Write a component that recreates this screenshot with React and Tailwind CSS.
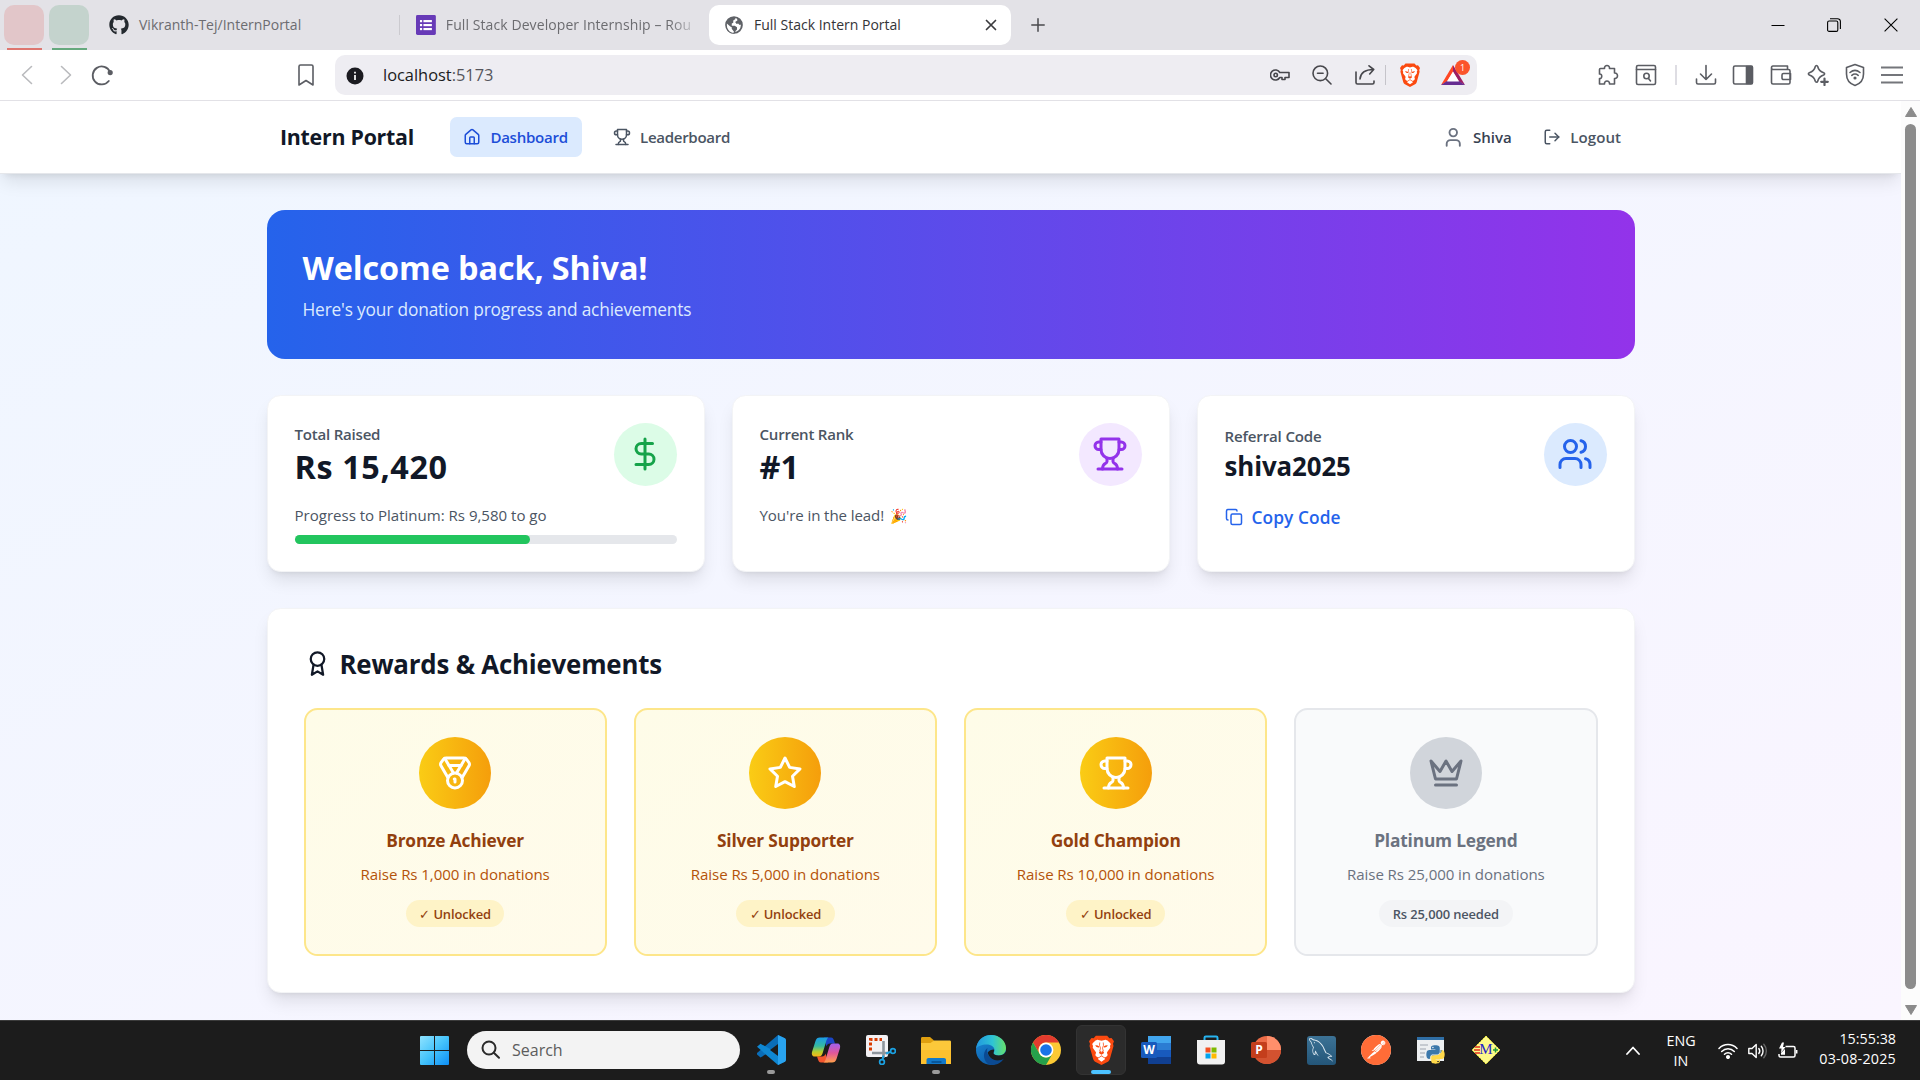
import React from "react";
import { House, LogOut, User, Users, DollarSign, Copy, Medal } from "lucide-react";
import { FaGithub, FaPython } from "react-icons/fa";
import { SiPostman } from "react-icons/si";
import { GrMysql } from "react-icons/gr";

function Line({ className, children, box = "0 0 24 24", width = 2 }) {
  return (
    <svg viewBox={box} className={className} fill="none" stroke="currentColor" strokeWidth={width} strokeLinecap="round" strokeLinejoin="round">
      {children}
    </svg>
  );
}

const Trophy = ({ className }) => (
  <Line className={className}>
    <path d="M6 9H4.5a2.5 2.5 0 0 1 0-5H6" />
    <path d="M18 9h1.5a2.5 2.5 0 0 0 0-5H18" />
    <path d="M4 22h16" />
    <path d="M10 14.66V17c0 .55-.47.98-.97 1.21C7.85 18.75 7 20.24 7 22" />
    <path d="M14 14.66V17c0 .55.47.98.97 1.21C16.15 18.75 17 20.24 17 22" />
    <path d="M18 2H6v7a6 6 0 0 0 12 0V2Z" />
  </Line>
);
const Crown = ({ className }) => (
  <Line className={className}>
    <path d="m2 4 3 12h14l3-12-6 7-4-7-4 7-6-7zm3 16h14" />
  </Line>
);
const Star = ({ className }) => (
  <Line className={className}>
    <polygon points="12 2 15.09 8.26 22 9.27 17 14.14 18.18 21.02 12 17.77 5.82 21.02 7 14.14 2 9.27 8.91 8.26 12 2" />
  </Line>
);
const Award = ({ className }) => (
  <Line className={className}>
    <circle cx="12" cy="8" r="6" />
    <path d="M15.477 12.89 17 22l-5-3-5 3 1.523-9.11" />
  </Line>
);

const BraveLogo = ({ className }) => (
  <svg viewBox="0 0 20 24" className={className}>
    <path d="M5.500 .5h9l1.800 2 1.700-.2L20 5l-.8 2 .4 1.800-2.900 10.400c-.3 1-.9 1.600-1.600 2.100L10 24l-5.100-2.700c-.7-.5-1.300-1.100-1.600-2.100L.4 8.800.8 7 0 5l2-2.700 1.700.2z" fill="#fb4a10" />
    <path d="M10 4.600c1.200 0 2.500-.9 3.700-.7 1.500.3 3 2.200 3.600 3.100.3.500-.3 1.100-.5 1.700l.2 1.500-2.400 3.300c-.4.500-.2 1 .1 1.500.3.700.2 1.400-.4 2l-1.200.8c-.4.200-.8.100-1.300-.3L10 16.200l-1.800 1.300c-.5.4-.9.500-1.300.3L5.700 17c-.6-.6-.7-1.300-.4-2 .3-.5.5-1 .1-1.500L3 10.200l.2-1.500C3 8.100 2.400 7.500 2.700 7c.6-.9 2.100-2.800 3.600-3.100 1.200-.2 2.500.7 3.700.7z" fill="#fff" />
    <path d="M7.300 18.700 10 17l2.700 1.700c.3.200.2.500 0 .7L10 21.300l-2.700-1.900c-.2-.2-.3-.5 0-.7z" fill="#fff" />
    <path d="M8.600 6l-.2 2.200.8 2.300-.6 2.300L10 13.700l1.400-.9-.6-2.300.8-2.300L11.400 6" fill="none" stroke="#fb4a10" strokeWidth=".6" strokeLinejoin="round" />
    <path d="M5 8.200c1.300-.1 2.400.2 3.200.9L8 9.900c-1.300.1-2.400-.2-3-1.700zM15 8.200c-1.300-.1-2.400.2-3.200.9l.2.800c1.300.1 2.400-.2 3-1.700zM8.500 13l1.500 1 1.500-1 .6 1.300L10 15.700l-2.100-1.400z" fill="#fb4a10" />
  </svg>
);

function TabStrip() {
  return (
    <div className="flex h-[50px] shrink-0 items-start bg-[#e3e2e7] text-[14px] text-[#6c6c70]">
      <div className="ml-1 flex w-10 flex-col items-center pt-[5px]">
        <div className="h-10 w-10 rounded-[10px] bg-[#e2c6c9]" />
        <div className="mt-[3px] h-[2px] w-[35px] bg-[#de7670]" />
      </div>
      <div className="ml-[5px] flex w-10 flex-col items-center pt-[5px]">
        <div className="h-10 w-10 rounded-[10px] bg-[#c4d3cd]" />
        <div className="mt-[3px] h-[2px] w-[35px] bg-[#66a97e]" />
      </div>
      <div className="ml-5 flex h-[50px] w-[290px] items-center">
        <FaGithub className="h-5 w-5 text-[#24292f]" />
        <span className="mb-0.5 ml-[10px] whitespace-nowrap">Vikranth-Tej/InternPortal</span>
      </div>
      <div className="mt-[15px] h-5 w-px bg-[#cbcacf]" />
      <div className="ml-4 flex h-[50px] w-[276px] items-center">
        <svg viewBox="0 0 20 20" className="h-5 w-5">
          <rect width="20" height="20" rx="1.500" fill="#673ab7" />
          <g fill="#fff">
            <rect x="4" y="5" width="2.200" height="2.200" /><rect x="7.500" y="5" width="8.500" height="2.200" />
            <rect x="4" y="9" width="2.200" height="2.200" /><rect x="7.500" y="9" width="8.500" height="2.200" />
            <rect x="4" y="13" width="2.200" height="2.200" /><rect x="7.500" y="13" width="8.500" height="2.200" />
          </g>
        </svg>
        <span className="mb-0.5 ml-[10px] w-[248px] overflow-hidden whitespace-nowrap tracking-[0.006em] [mask-image:linear-gradient(to_right,#000_91%,transparent_103%)]">Full Stack Developer Internship – Rou</span>
      </div>
      <div className="ml-[17px] mt-[5px] flex h-10 w-[302px] items-center rounded-[10px] bg-white pl-4 text-[#343437]">
        <svg viewBox="0 0 24 24" className="h-[18px] w-[18px]">
          <circle cx="12" cy="12" r="10.500" fill="#fff" stroke="#5f6267" strokeWidth="2.600" />
          <path d="M2 9C3 4 8 1 13 2l1 2-3 2v3l-2 1v3h4l3 2v3l-2 2-1 3c-4 1-9-1-11-6l4 1 1-2-3-2-2-3z" fill="#5f6267" />
          <path d="M16 2c4 1 6 5 6.500 9l-3 1-2-2-2 .5-2-2.500 3-2z" fill="#5f6267" />
          <path d="M2.500 10 7 14l2 1v2l3 4-1 1.500C6 22 2 17 2.500 10z" fill="#fff" />
        </svg>
        <span className="mb-0.5 ml-[11px] whitespace-nowrap">Full Stack Intern Portal</span>
        <Line box="0 0 12 12" width={1.7} className="ml-auto mr-[14px] h-3 w-3 text-[#3a3a3d]">
          <path d="m1.500 1.500 9 9m0-9-9 9" />
        </Line>
      </div>
      <Line box="0 0 14 14" width={1.5} className="ml-5 mt-[18px] h-[14px] w-[14px] text-[#4a4a4e]">
        <path d="M7 .8v12.400M.8 7h12.400" />
      </Line>
      <div className="ml-auto mr-[22px] flex h-[49px] items-center text-black">
        <svg viewBox="0 0 14 14" className="h-[14px] w-[14px]" fill="none" stroke="currentColor"><path d="M.5 7.500h13" /></svg>
        <svg viewBox="0 0 14 14" className="ml-[42px] h-[14px] w-[14px]" fill="none" stroke="currentColor" strokeWidth="1.100">
          <rect x=".6" y="3" width="10.200" height="10.400" rx="1.500" />
          <path d="M3 .7h7.500a2.800 2.800 0 0 1 2.900 2.800V11" />
        </svg>
        <svg viewBox="0 0 14 14" className="ml-[43px] h-[14px] w-[14px]" fill="none" stroke="currentColor" strokeWidth="1.100"><path d="m.6.6 12.800 12.800m0-12.800L.6 13.400" /></svg>
      </div>
    </div>
  );
}

function Toolbar() {
  return (
    <div className="flex h-[51px] shrink-0 items-center border-b border-[#e2e1e6] bg-white text-[#5b5d63]">
      <Line box="0 0 12 20" width={1.6} className="ml-[21px] h-5 w-3 text-[#b9babd]"><path d="m10.500 1.500-9 8.500 9 8.500" /></Line>
      <Line box="0 0 12 20" width={1.6} className="ml-[27px] h-5 w-3 text-[#b9babd]"><path d="m1.500 1.500 9 8.500-9 8.500" /></Line>
      <Line box="0 0 22 22" width={1.8} className="ml-[19px] h-[22px] w-[22px]">
        <path d="M17.800 17a9 9 0 1 1 1.200-9" />
        <circle cx="19.200" cy="8.600" r="1.700" fill="currentColor" />
      </Line>
      <Line box="0 0 16 22" width={1.6} className="ml-[185px] h-[22px] w-4"><path d="M1 2.500C1 1.500 1.600 1 2.500 1h11c.9 0 1.500.500 1.500 1.500V21l-7-4.500L1 21z" /></Line>
      <div className="ml-[21px] flex h-10 w-[1142px] items-center rounded-[10px] bg-[#eeedf2] text-[#47474c]">
        <svg viewBox="0 0 18 18" className="ml-[11px] mt-px h-[18px] w-[18px]">
          <circle cx="9" cy="9" r="8.500" fill="#1b1b20" />
          <path d="M9 8v5M9 4.700v1.700" stroke="#fff" strokeWidth="1.700" />
        </svg>
        <span className="ml-[19px] text-[16.400px] text-[#1b1b20]">localhost<span className="text-[#55555b]">:5173</span></span>
        <Line box="0 0 20 14" width={1.6} className="ml-auto h-[14px] w-5">
          <path d="M9.800 4.500A5 5 0 1 0 9.800 9.500H12V11.500h3V9.500h4V4.500z" />
          <circle cx="5.700" cy="7" r="1.700" />
        </Line>
        <Line box="0 0 20 20" width={1.6} className="ml-[22px] h-5 w-5">
          <circle cx="8.300" cy="8.300" r="7.300" /><path d="m14 14 5 5M5.500 8.300h5.600" />
        </Line>
        <Line box="0 0 20 20" width={1.6} className="ml-[23px] h-5 w-5">
          <path d="M1 7v10.500c0 1 .6 1.500 1.500 1.500h15c1 0 1.500-.500 1.500-1.500V16M5 14c.5-6 5-9.500 13.500-9.500M14 .8l4.700 3.700L14.700 9" />
        </Line>
        <div className="ml-[10px] h-5 w-px bg-[#c5c4ca]" />
        <BraveLogo className="ml-[14px] h-6 w-5" />
        <div className="relative ml-[21px] mr-[12px] h-[22px] w-6">
          <svg viewBox="0 0 24 22" className="h-[22px] w-6">
            <path d="M12 1 0 21l6-3.500L12 8z" fill="#ff4724" />
            <path d="m12 1 12 20-6-3.500L12 8z" fill="#9e1f63" />
            <path d="M0 21h24l-6-4H6z" fill="#662d91" />
            <path d="m12 7.500 6 10H6z" fill="#fff" />
          </svg>
          <div className="absolute -top-1 left-[14px] flex h-[15px] w-[15px] items-center justify-center rounded-full bg-[#fb542b] text-[9px] text-white">1</div>
        </div>
      </div>
      <Line box="0 0 22 22" width={1.6} className="ml-[120px] h-[22px] w-[22px]">
        <path d="M3.500 4.500h4C7 .5 13 .5 12.500 4.500h5V9c4-.5 4 6 0 5.500V20h-5c.5-4-5.500-4-5 0h-5v-5.500C5.500 15 5.500 9.500 2.500 10V5.500c0-.6.400-1 1-1z" />
      </Line>
      <Line box="0 0 22 22" width={1.6} className="ml-[16px] h-[22px] w-[22px]">
        <rect x="1.500" y="1.500" width="19" height="19" rx="1.500" /><path d="M1.500 5.500h19M13.500 14.500l2 2.500" /><circle cx="11.500" cy="12" r="2.700" />
      </Line>
      <div className="ml-[18px] h-5 w-[2px] bg-[#dedde3]" />
      <Line box="0 0 22 22" width={1.6} className="ml-[18px] h-[22px] w-[22px]">
        <path d="M11 1.500v14M5.500 10l5.500 5.500 5.500-5.500M1.500 15v3.500c0 1 .700 1.500 1.500 1.500h16c.8 0 1.500-.5 1.500-1.500V15" />
      </Line>
      <Line box="0 0 22 22" width={1.6} className="ml-[15px] h-[22px] w-[22px]">
        <rect x="1.500" y="2" width="19" height="18" rx="1.500" /><path d="M14.500 2.500H20v17h-5.500z" fill="currentColor" />
      </Line>
      <Line box="0 0 22 22" width={1.6} className="ml-[16px] h-[22px] w-[22px]">
        <path d="M1.500 3.500v15c0 1 .5 1.500 1.500 1.500h15.500c1 0 1.500-.5 1.500-1.500V7c0-1-.5-1.500-1.500-1.500H3c-1 0-1.500-.7-1.500-1.700S2 2 3 2h14.500v3.500M20.500 9.500h-7a1.500 1.500 0 0 0-1.500 1.500v3a1.500 1.500 0 0 0 1.500 1.500h7z" />
      </Line>
      <Line box="0 0 22 22" width={1.6} className="ml-[15px] h-[22px] w-[22px]">
        <path d="M9.500 1.500c.7 0 1 .4 1.200 1 .8 3.500 2.300 5 6 6.200 1.200.4 1.200 1.900 0 2.300-3.700 1.200-5.200 2.700-6 6.200-.3 1.200-2 1.200-2.400 0-.8-3.500-2.300-5-6-6.200-1.200-.4-1.200-1.900 0-2.300 3.700-1.200 5.200-2.700 6-6.200.2-.6.500-1 1.200-1z" />
        <path d="M17.500 14.500v6.500M14.200 17.800h6.600" strokeWidth="2.200" />
      </Line>
      <Line box="0 0 22 24" width={1.6} className="ml-[15px] h-6 w-[22px]">
        <path d="m11 1.500 8.500 3v6.500c0 6-4 10-8.500 11.500C6.500 21 2.500 17 2.500 11V4.500z" />
        <path d="M6 9.500c3-2.500 7-2.500 10 0M7.800 12.300c2-1.600 4.400-1.600 6.400 0" />
        <circle cx="11" cy="15" r=".8" fill="currentColor" />
      </Line>
      <svg viewBox="0 0 22 18" className="ml-[15px] h-[18px] w-[22px]" fill="none" stroke="#74767b" strokeWidth="1.800"><path d="M0 1.500h22M0 9h22M0 16.500h22" /></svg>
    </div>
  );
}

function Nav() {
  return (
    <nav className="relative border-b border-[#e5e7eb] bg-white shadow-lg">
      <div className="mx-auto flex h-16 max-w-7xl items-center px-8">
        <span className="ml-3 w-[119px] whitespace-nowrap text-[19px] font-bold tracking-[-0.012em] text-[#111827]">Intern Portal</span>
        <div className="ml-8 flex gap-4 text-[13.400px] font-semibold">
          <div className="flex h-9 w-[117px] items-center rounded-md bg-[#dbeafe] px-3 tracking-[-0.018em] text-[#1d4ed8]">
            <House className="mr-2 h-4 w-4" />Dashboard
          </div>
          <div className="flex h-9 items-center px-3 tracking-[-0.020em] text-[#4b5563]">
            <Trophy className="mr-2 h-4 w-4" />Leaderboard
          </div>
        </div>
        <div className="ml-auto flex items-center gap-4 text-[13.400px] font-semibold">
          <div className="flex items-center text-[#374151]">
            <User className="mr-2 h-5 w-5 text-[#6b7280]" />Shiva
          </div>
          <div className="flex h-9 items-center px-3 tracking-[0.002em] text-[#4b5563]">
            <LogOut className="mr-2 h-4 w-4" />Logout
          </div>
        </div>
      </div>
    </nav>
  );
}

function StatCard({ label, labelClass, value, valueClass, badge, icon, children }) {
  return (
    <div className="rounded-xl border border-[#f3f4f6] bg-white p-6 shadow-lg">
      <div className="flex h-14 items-center justify-between">
        <div>
          <p className={`text-[13.400px] font-semibold leading-5 text-[#4b5563] ${labelClass}`}>{label}</p>
          <p className={`-mb-px mt-px font-bold text-[#111827] ${valueClass}`}>{value}</p>
        </div>
        <div className={`rounded-full p-3 ${badge}`}>{icon}</div>
      </div>
      <div className="mt-4">{children}</div>
    </div>
  );
}

const REWARDS = [
  { name: "Bronze Achiever", goal: "Raise Rs 1,000 in donations", Icon: Medal, open: true },
  { name: "Silver Supporter", goal: "Raise Rs 5,000 in donations", Icon: Star, open: true },
  { name: "Gold Champion", goal: "Raise Rs 10,000 in donations", Icon: Trophy, open: true },
  { name: "Platinum Legend", goal: "Raise Rs 25,000 in donations", Icon: Crown, open: false },
];

function Reward({ name, goal, Icon, open }) {
  const tone = open
    ? { card: "border-[#fde68a] bg-[linear-gradient(to_bottom_right,#fefce8,#fffbeb)]", disc: "bg-[linear-gradient(to_right,#facc15,#f59e0b)] text-white", title: "text-[#92400e]", text: "text-[#b45309]", pill: "bg-[#fef3c7] text-[#92400e]" }
    : { card: "border-[#e5e7eb] bg-[#f9fafb]", disc: "bg-[#d1d5db] text-[#6b7280]", title: "text-[#6b7280]", text: "text-[#6b7280]", pill: "bg-[#f3f4f6] text-[#4b5563]" };
  return (
    <div className={`flex flex-col items-center rounded-xl border-2 p-6 ${tone.card}`}>
      <div className={`rounded-full p-4 ${tone.disc}`}><Icon className="h-8 w-8" /></div>
      <h3 className={`mt-4 text-[15.400px] font-bold leading-6 tracking-[-0.010em] ${tone.title}`}>{name}</h3>
      <p className={`mt-2 text-[13.400px] leading-5 tracking-[-0.005em] ${tone.text}`}>{goal}</p>
      <div className={`mt-[13px] rounded-full px-3 py-1 text-[11.500px] font-semibold leading-4 tracking-[-0.010em] ${tone.pill}`}>
        {open ? <><span className="font-normal">✓</span> Unlocked</> : "Rs 25,000 needed"}
      </div>
    </div>
  );
}

function Page() {
  return (
    <div className="flex-1 overflow-hidden bg-[linear-gradient(to_bottom_right,#eff6ff,#faf5ff)]">
      <div className="[zoom:1.125]">
        <Nav />
        <main className="mx-auto max-w-7xl px-8 pt-8">
          <div className="mb-8 rounded-2xl bg-[linear-gradient(to_right,#2563eb,#9333ea)] p-8 text-white">
            <h1 className="mb-[7px] mt-px text-[28.800px] font-bold leading-9 tracking-[-0.003em]">Welcome back, Shiva!</h1>
            <p className="text-[15.400px] leading-6 tracking-[-0.010em] text-[#dbeafe]">Here's your donation progress and achievements</p>
          </div>
          <div className="mb-8 grid grid-cols-3 gap-6">
            <StatCard label="Total Raised" labelClass="tracking-[-0.015em]" value="Rs 15,420" valueClass="text-[28.800px] leading-9 tracking-[0.019em]" badge="bg-[#dcfce7]" icon={<DollarSign className="h-8 w-8 text-[#16a34a]" />}>
              <p className="mb-2 text-[13.400px] leading-5 tracking-[-0.001em] text-[#4b5563]">Progress to Platinum: Rs 9,580 to go</p>
              <div className="h-2 rounded-full bg-[#e5e7eb]"><div className="h-2 w-[61.68%] rounded-full bg-[#22c55e]" /></div>
            </StatCard>
            <StatCard label="Current Rank" labelClass="tracking-[-0.016em]" value="#1" valueClass="text-[28.800px] leading-9" badge="bg-[#f3e8ff]" icon={<Trophy className="h-8 w-8 text-[#9333ea]" />}>
              <p className="text-[13.400px] leading-5 tracking-[-0.006em] text-[#4b5563]">You're in the lead! <span className="ml-[2px] text-[12.500px]">🎉</span></p>
            </StatCard>
            <StatCard label="Referral Code" labelClass="tracking-[-0.010em]" value="shiva2025" valueClass="text-[23px] leading-8 tracking-[-0.004em]" badge="bg-[#dbeafe]" icon={<Users className="h-8 w-8 text-[#2563eb]" />}>
              <div className="flex items-center text-[15.400px] font-semibold leading-6 tracking-[0.005em] text-[#2563eb]">
                <Copy className="mr-2 h-4 w-4" />Copy Code
              </div>
            </StatCard>
          </div>
          <section className="rounded-xl border border-[#f3f4f6] bg-white p-8 shadow-lg">
            <h2 className="mb-6 flex h-8 items-center text-[23px] font-bold leading-8 tracking-[-0.008em] text-[#111827]">
              <Award className="mr-2 h-6 w-6" /><span className="pt-0.5">Rewards &amp; Achievements</span>
            </h2>
            <div className="grid grid-cols-4 gap-6">
              {REWARDS.map((r) => <Reward key={r.name} {...r} />)}
            </div>
          </section>
        </main>
      </div>
    </div>
  );
}

function Scrollbar() {
  return (
    <div className="flex w-[19px] flex-col items-center bg-[#fcfcfc]">
      <svg viewBox="0 0 12 10" className="mt-1.5 h-[10px] w-3"><path d="M6 .5 11.500 9.500H.5z" fill="#8b8b8b" stroke="#8b8b8b" strokeLinejoin="round" /></svg>
      <div className="mt-[7px] h-[865px] w-[11px] rounded-full bg-[#8b8b8b]" />
      <svg viewBox="0 0 12 10" className="mt-4 h-[10px] w-3"><path d="M.5.5h11L6 9.500z" fill="#8b8b8b" stroke="#8b8b8b" strokeLinejoin="round" /></svg>
    </div>
  );
}

const VsCode = () => (
  <svg viewBox="0 0 30 30" className="h-[30px] w-[30px]">
    <path d="m22 0 7 3.500V8L4.500 22.500 1 19.500v-1.500z" fill="#0a6db8" />
    <path d="m1 11.800 3.500-3L29 22v4.500L22 30z" fill="#0f87d2" />
    <path d="m22 0 7 3.300c.7.400 1 .9 1 1.700v20c0 .8-.3 1.300-1 1.700L22 30z" fill="#29a3ef" />
    <path d="M22 9v12l-8-6z" fill="#1c1c1c" />
  </svg>
);
const Copilot = () => (
  <svg viewBox="0 0 30 28" className="h-7 w-[30px]">
    <defs>
      <linearGradient id="cpA" x1="0" y1="0" x2="0" y2="1"><stop offset="0" stopColor="#1b9de8" /><stop offset=".45" stopColor="#35b9a0" /><stop offset=".75" stopColor="#b5cf30" /><stop offset="1" stopColor="#fbb416" /></linearGradient>
      <linearGradient id="cpB" x1="0" y1="0" x2="0" y2="1"><stop offset="0" stopColor="#a060f0" /><stop offset=".5" stopColor="#e2569a" /><stop offset="1" stopColor="#ffa04a" /></linearGradient>
    </defs>
    <path d="M13 1.500h7c2 0 2.500 1.500 3 3l1 3h-5c-2 0-3 1-3.500 3z" fill="#1b46c8" />
    <path d="M17 26.500h-7c-2 0-2.500-1.500-3-3l-1-3h5c2 0 3-1 3.500-3z" fill="#f4572f" />
    <path d="M9 1.500h8.500c-1.500 1-2 2.500-2.500 4.500l-3.500 11.500c-.7 2-1.700 3-3.500 3H3.500C1 20.500.5 18 1 16L4.500 5C5.300 2.500 6.500 1.500 9 1.500z" fill="url(#cpA)" />
    <path d="M21 26.500h-8.500c1.500-1 2-2.500 2.500-4.500l3.500-11.500c.7-2 1.700-3 3.500-3h4.500c2.500 0 3 2.500 2.500 4.500L25.500 23c-.8 2.500-2 3.500-4.500 3.500z" fill="url(#cpB)" />
  </svg>
);
const Snip = () => (
  <svg viewBox="0 0 30 30" className="h-[30px] w-[30px]">
    <rect x="0" y="0" width="22" height="22" rx="2" fill="#f3f1f4" />
    <path d="M4.500 15.500V4.500H16" fill="none" stroke="#d83b01" strokeWidth="3" strokeDasharray="3 2" />
    <path d="M17.500 6v17M6 18h17" stroke="#8f959c" strokeWidth="2.600" />
    <circle cx="27" cy="16" r="2.400" fill="none" stroke="#1ba1e2" strokeWidth="1.700" />
    <circle cx="16" cy="27" r="2.400" fill="none" stroke="#1ba1e2" strokeWidth="1.700" />
    <path d="m20 18.500 5-1.800M17.500 20.500l-1 4.300" stroke="#1ba1e2" strokeWidth="2" />
  </svg>
);
const Folder = () => (
  <svg viewBox="0 0 30 30" className="h-[30px] w-[30px]">
    <path d="M0 3.500C0 2.500.5 2 1.500 2H9l4 3.500-2.500 4H0z" fill="#e0a010" />
    <path d="M0 8h9.500L13 5.500h15.500c1 0 1.500.5 1.500 1.500v22H0z" fill="#fcc83a" />
    <path d="M0 15h30v14H0z" fill="#fdc02e" />
    <path d="M5.500 29v-4c0-1.300.8-2 2-2h15.500c1.200 0 2 .7 2 2v4z" fill="#1279ca" />
    <path d="M11 27h9" stroke="#064c8c" strokeWidth="1.400" strokeLinecap="round" />
  </svg>
);
const Edge = () => (
  <svg viewBox="0 0 30 30" className="h-[30px] w-[30px]">
    <defs>
      <linearGradient id="edA" x1="0" y1=".3" x2="1" y2=".3"><stop offset="0" stopColor="#2196e0" /><stop offset=".55" stopColor="#2fc4d4" /><stop offset="1" stopColor="#67e06a" /></linearGradient>
      <linearGradient id="edB" x1="0" y1="0" x2=".6" y2="1"><stop offset="0" stopColor="#1b8bd8" /><stop offset="1" stopColor="#0c5ba8" /></linearGradient>
    </defs>
    <circle cx="15" cy="15" r="15" fill="url(#edB)" />
    <path d="M0 14C1 5.500 7 0 15 0c9 0 15 6.500 15 13 0 5-3.500 7.500-7.500 7.500-3 0-5-1-5-2.200 0-1 1-1.300 1-3.300 0-3-3-5.500-8-5.500C6 9.500 1.500 11 0 14z" fill="url(#edA)" />
    <path d="M11.500 13c-2 6 3 12.500 10 12.500 3 0 5-1 6.500-2-3 4.500-7.500 6.500-12 6.500-6 0-8.500-6.500-8-10.500.3-3 1.500-5 3.500-6.500z" fill="#0b4a92" />
    <path d="M30 19c-.5 2-1 3.500-2 4.500-1.500 1-3.500 2-6.500 2-5.500 0-9-4-9.800-8 1.500-1.800 3.500-3 6.300-3 .3 1.700-.5 2.700-.5 3.800 0 1.200 2 2.200 5 2.200 3 0 5.500-1 7.500-4z" fill="#1c1c1c" />
  </svg>
);
const Chrome = () => (
  <svg viewBox="0 0 30 30" className="h-[30px] w-[30px]">
    <circle cx="15" cy="15" r="15" fill="#fcc934" />
    <path d="M2 7.500A15 15 0 0 1 28 7.500H15A7.500 7.500 0 0 0 8.500 18.800z" fill="#e33b2e" />
    <path d="M2 7.500 8.500 18.800A7.500 7.500 0 0 0 21.500 18.800L15 30A15 15 0 0 1 2 7.500z" fill="#25a04b" />
    <circle cx="15" cy="15" r="7.400" fill="#fff" />
    <circle cx="15" cy="15" r="5.800" fill="#1a73e8" />
  </svg>
);
const Word = () => (
  <div className="relative h-[30px] w-[30px]">
    <svg viewBox="0 0 30 30" className="h-[30px] w-[30px]">
      <path d="M7 1h23v7.500H7z" fill="#41a5ee" /><path d="M7 8h23v7.500H7z" fill="#2b7cd3" /><path d="M7 15h23v7H7z" fill="#185abd" /><path d="M7 22h23v7H7z" fill="#103f91" />
      <rect x="0" y="7" width="16" height="16" rx="1.500" fill="#185abd" />
    </svg>
    <span className="absolute left-0 top-[7px] w-4 text-center text-[12px] font-bold leading-4 text-white">W</span>
  </div>
);
const PowerPoint = () => (
  <div className="relative h-[30px] w-[30px]">
    <svg viewBox="0 0 30 30" className="h-[30px] w-[30px]">
      <circle cx="16" cy="15" r="14" fill="#ed6c47" /><path d="M16 1a14 14 0 0 1 14 14H16z" fill="#ff8f6b" /><path d="M2 15h28a14 14 0 0 1-28 0z" fill="#d35230" />
      <rect x="0" y="7" width="16" height="16" rx="1.500" fill="#c43e1c" />
    </svg>
    <span className="absolute left-0 top-[7px] w-4 text-center text-[12px] font-bold leading-4 text-white">P</span>
  </div>
);
const Store = () => (
  <svg viewBox="0 0 30 30" className="h-[30px] w-[30px]">
    <path d="M8.500 6V2.800c0-.9.500-1.300 1.300-1.300h10.400c.8 0 1.300.4 1.300 1.300V6" fill="none" stroke="#27b4f0" strokeWidth="2" />
    <path d="M1 5h28v21.500a3 3 0 0 1-3 3H4a3 3 0 0 1-3-3z" fill="#f1f1f1" />
    <path d="M9.500 12.500h5v5h-5z" fill="#f25022" /><path d="M15.500 12.500h5v5h-5z" fill="#7fba00" /><path d="M9.500 18.500h5v5h-5z" fill="#00a4ef" /><path d="M15.500 18.500h5v5h-5z" fill="#ffb900" />
  </svg>
);
const MySql = () => (
  <div className="flex h-[29px] w-[29px] items-center justify-center rounded-[3px] bg-[linear-gradient(to_bottom,#3c7295,#245679)]">
    <GrMysql className="h-6 w-6 text-[#dfeaf2]" />
  </div>
);
const Postman = () => (
  <div className="rounded-full bg-white">
    <SiPostman className="h-[30px] w-[30px] text-[#ff6c37]" />
  </div>
);
const PyFile = () => (
  <div className="relative h-[30px] w-[30px]">
    <svg viewBox="0 0 30 30" className="h-[30px] w-[30px]">
      <path d="M1 2h27v24H1z" fill="#eceff1" /><path d="M1 2h27v3H1z" fill="#2f6ea5" />
      <path d="M4 10h8M4 14h6M4 18h5M4 22h4" stroke="#b8bfc5" strokeWidth="1.500" />
    </svg>
    <FaPython className="absolute left-[9px] top-[9px] h-[21px] w-[21px] text-[#3b78ab] [clip-path:polygon(0_0,100%_0,78%_40%,60%_52%,28%_56%,20%_78%,0_78%)]" />
    <FaPython className="absolute left-[9px] top-[9px] h-[21px] w-[21px] text-[#ffd94a] [clip-path:polygon(100%_100%,0_100%,20%_78%,28%_56%,60%_52%,78%_40%,80%_22%,100%_22%)]" />
  </div>
);
const Diamond = () => (
  <div className="relative h-[30px] w-[30px]">
    <svg viewBox="0 0 30 30" className="h-[30px] w-[30px]">
      <path d="m15 1 14 14-14 14L1 15z" fill="#fdf98a" stroke="#f4ee3c" strokeDasharray="2 1" />
      <path d="M3 15h6M4 12h5M4 18h5" stroke="#e0301e" strokeWidth="1.500" /><path d="M22 15h5M24.500 12.500v5" stroke="#1f9a35" strokeWidth="1.500" />
    </svg>
    <span className="absolute inset-0 text-center font-['Liberation_Serif'] text-[15px] leading-[28px] text-[#2424c8]">M</span>
  </div>
);

const APPS = [
  { id: "code", icon: <VsCode />, run: true },
  { id: "copilot", icon: <Copilot /> },
  { id: "snip", icon: <Snip /> },
  { id: "files", icon: <Folder />, run: true },
  { id: "edge", icon: <Edge /> },
  { id: "chrome", icon: <Chrome /> },
  { id: "brave", icon: <BraveLogo className="h-[30px] w-[25px]" />, active: true },
  { id: "word", icon: <Word /> },
  { id: "store", icon: <Store /> },
  { id: "ppt", icon: <PowerPoint /> },
  { id: "mysql", icon: <MySql /> },
  { id: "postman", icon: <Postman /> },
  { id: "python", icon: <PyFile /> },
  { id: "diamond", icon: <Diamond /> },
];

function Taskbar() {
  return (
    <div className="flex h-[60px] shrink-0 items-center border-t border-[#3b3b3b] bg-[#1c1c1c] text-white">
      <svg viewBox="0 0 29 29" className="ml-[420px] h-[29px] w-[29px]">
        <defs><linearGradient id="win" x1="0" y1="0" x2="1" y2="1"><stop offset="0" stopColor="#8fe3ff" /><stop offset=".5" stopColor="#45c3fb" /><stop offset="1" stopColor="#0d8ef5" /></linearGradient></defs>
        <path d="M1 0h13v14H0V1a1 1 0 0 1 1-1zM15 0h13a1 1 0 0 1 1 1v13H15zM0 15h14v14H1a1 1 0 0 1-1-1zM15 15h14v13a1 1 0 0 1-1 1H15z" fill="url(#win)" />
      </svg>
      <div className="mb-px ml-[18px] flex h-[38px] w-[273px] items-center rounded-full bg-[#f3f3f3] text-[#5c5c5c]">
        <Line box="0 0 20 20" width={2} className="ml-[14px] h-5 w-5 text-[#2a2a2a]"><circle cx="8" cy="8" r="6.500" /><path d="m12.800 12.800 5.200 5" /></Line>
        <span className="ml-[11px] text-[16px]">Search</span>
      </div>
      <div className="mb-px ml-[6px] flex items-center gap-[5px]">
        {APPS.map((a) => (
          <div key={a.id} className={a.active ? "relative flex h-[50px] w-[50px] items-center justify-center rounded-md border border-[#333] bg-[#2b2b2b]" : "relative flex h-[50px] w-[50px] items-center justify-center"}>
            {a.icon}
            {a.run && <div className="absolute bottom-px left-[21px] h-1 w-2 rounded-full bg-[#9a9a9a]" />}
            {a.active && <div className="absolute bottom-0 left-[14px] h-1 w-5 rounded-full bg-[#4cc2ff]" />}
          </div>
        ))}
      </div>
      <Line box="0 0 14 9" width={1.8} className="ml-auto h-[9px] w-[14px]"><path d="m1 8 6-6.500L13 8" /></Line>
      <div className="ml-5 w-[42px] text-center text-[14.300px] leading-5">ENG<br />IN</div>
      <svg viewBox="0 0 20 16" className="ml-4 h-4 w-5" fill="none" stroke="currentColor" strokeWidth="1.500" strokeLinecap="round">
        <path d="M1 5.500c5-5.300 13-5.300 18 0M3.700 8.500c3.500-3.700 9.100-3.700 12.600 0M6.500 11.300c2-2.100 5-2.100 7 0" /><circle cx="10" cy="14" r="1.300" fill="currentColor" />
      </svg>
      <svg viewBox="0 0 20 16" className="ml-[10px] h-4 w-5" fill="none" stroke="currentColor" strokeWidth="1.400" strokeLinecap="round" strokeLinejoin="round">
        <path d="M.8 5.500h3.200L8.200 1.500v13L4 10.500H.8zM10.800 5.500c1.200 1.500 1.200 3.500 0 5M13.300 3.300c2.300 2.700 2.300 6.700 0 9.400" /><path d="M15.800 1.300c3.400 3.800 3.400 9.600 0 13.400" stroke="#666" />
      </svg>
      <svg viewBox="0 0 20 18" className="ml-[10px] h-[18px] w-5" fill="none" stroke="currentColor" strokeWidth="1.500" strokeLinejoin="round">
        <path d="M7.500 4.500h8c1 0 1.500.6 1.500 1.500v7.500c0 1-.5 1.500-1.500 1.500h-13C1.500 15 1 14.500 1 13.500V12M18.700 8v3.500" />
        <path d="M4 .5 1 6.500h2.500L3 11l4.500-6H5L6 .5z" fill="currentColor" stroke="none" /><path d="M3 12.800V11l4-4v5.800z" fill="currentColor" stroke="none" />
      </svg>
      <div className="mb-[3px] ml-5 mr-6 w-[78px] whitespace-nowrap text-right text-[14.300px] leading-5">15:55:38<br /><span className="tracking-[0.015em]">03-08-2025</span></div>
    </div>
  );
}

export default function App() {
  return (
    <div className="flex h-[1080px] w-[1920px] flex-col overflow-hidden bg-white font-['Open_Sans','Noto_Sans',sans-serif]">
      <TabStrip />
      <Toolbar />
      <div className="flex h-[919px] shrink-0">
        <Page />
        <Scrollbar />
      </div>
      <Taskbar />
    </div>
  );
}
